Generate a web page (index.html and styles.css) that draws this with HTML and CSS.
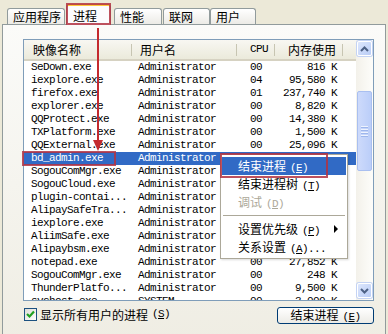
FILE: index.html
```html
<!DOCTYPE html>
<html lang="zh-CN">
<head>
    <meta charset="UTF-8">
    <title>Windows 任务管理器 - 进程</title>
    <link rel="stylesheet" href="styles.css">
</head>
<body>
    <div class="window">
        <div class="tabs">
            <div class="tab t1">应用程序</div>
            <div class="tab t2 sel">进程</div>
            <div class="tab t3">性能</div>
            <div class="tab t4">联网</div>
            <div class="tab t5">用户</div>
        </div>
        <div class="panel">
            <div class="list">
                <div class="list-main">
                    <div class="head">
                        <div class="hc name">映像名称</div>
                        <div class="hc user">用户名</div>
                        <div class="hc cpu mono">CPU</div>
                        <div class="hc mem">内存使用</div>
                        <div class="hc rest"></div>
                    </div>
                    <div class="row"><span class="name">SeDown.exe</span><span class="user">Administrator</span><span class="cpu">00</span><span class="mem">816 K</span></div>
                    <div class="row"><span class="name">iexplore.exe</span><span class="user">Administrator</span><span class="cpu">04</span><span class="mem">95,580 K</span></div>
                    <div class="row"><span class="name">firefox.exe</span><span class="user">Administrator</span><span class="cpu">01</span><span class="mem">237,740 K</span></div>
                    <div class="row"><span class="name">explorer.exe</span><span class="user">Administrator</span><span class="cpu">00</span><span class="mem">8,820 K</span></div>
                    <div class="row"><span class="name">QQProtect.exe</span><span class="user">Administrator</span><span class="cpu">00</span><span class="mem">14,380 K</span></div>
                    <div class="row"><span class="name">TXPlatform.exe</span><span class="user">Administrator</span><span class="cpu">00</span><span class="mem">1,500 K</span></div>
                    <div class="row"><span class="name">QQExternal.exe</span><span class="user">Administrator</span><span class="cpu">00</span><span class="mem">25,096 K</span></div>
                    <div class="row selected"><span class="name">bd_admin.exe</span><span class="user">Administrator</span><span class="cpu"></span><span class="mem"></span></div>
                    <div class="row"><span class="name">SogouComMgr.exe</span><span class="user">Administrator</span><span class="cpu"></span><span class="mem"></span></div>
                    <div class="row"><span class="name">SogouCloud.exe</span><span class="user">Administrator</span><span class="cpu"></span><span class="mem"></span></div>
                    <div class="row"><span class="name">plugin-contai...</span><span class="user">Administrator</span><span class="cpu"></span><span class="mem"></span></div>
                    <div class="row"><span class="name">AlipaySafeTra...</span><span class="user">Administrator</span><span class="cpu"></span><span class="mem"></span></div>
                    <div class="row"><span class="name">iexplore.exe</span><span class="user">Administrator</span><span class="cpu"></span><span class="mem"></span></div>
                    <div class="row"><span class="name">AliimSafe.exe</span><span class="user">Administrator</span><span class="cpu"></span><span class="mem"></span></div>
                    <div class="row"><span class="name">Alipaybsm.exe</span><span class="user">Administrator</span><span class="cpu"></span><span class="mem"></span></div>
                    <div class="row"><span class="name">notepad.exe</span><span class="user">Administrator</span><span class="cpu">00</span><span class="mem">27,852 K</span></div>
                    <div class="row"><span class="name">SogouComMgr.exe</span><span class="user">Administrator</span><span class="cpu">00</span><span class="mem">248 K</span></div>
                    <div class="row"><span class="name">ThunderPlatfo...</span><span class="user">Administrator</span><span class="cpu">00</span><span class="mem">9,500 K</span></div>
                    <div class="row"><span class="name">svchost.exe</span><span class="user">SYSTEM</span><span class="cpu">00</span><span class="mem">3,000 K</span></div>
                </div>
                <div class="vscroll">
                    <div class="sbtn up">
                        <svg width="9" height="6" viewBox="0 0 9 6"><path d="M1 5 L4.5 1.5 L8 5" fill="none" stroke="#4D6185" stroke-width="2"/></svg>
                    </div>
                    <div class="thumb"><span></span><span></span><span></span><span></span></div>
                    <div class="sbtn down">
                        <svg width="9" height="6" viewBox="0 0 9 6"><path d="M1 1 L4.5 4.5 L8 1" fill="none" stroke="#4D6185" stroke-width="2"/></svg>
                    </div>
                </div>
            </div>
            <div class="footer">
                <label class="check">
                    <span class="box">
                        <svg width="11" height="11" viewBox="0 0 11 11"><path d="M2 5 L4.5 7.5 L9 2.5" fill="none" stroke="#21A121" stroke-width="2.2"/></svg>
                    </span>
                    显示所有用户的进程<span class="mono key">(<u>S</u>)</span>
                </label>
                <button class="btn">结束进程<span class="mono key">(<u>E</u>)</span></button>
            </div>
        </div>

        <div class="menu">
            <div class="mi hot">结束进程<span class="mono key">(<u>E</u>)</span></div>
            <div class="mi">结束进程树<span class="mono key">(<u>T</u>)</span></div>
            <div class="mi off">调试<span class="mono key">(<u>D</u>)</span></div>
            <div class="sep"></div>
            <div class="mi sub">设置优先级<span class="mono key">(<u>P</u>)</span></div>
            <div class="mi">关系设置<span class="mono key">(<u>A</u>)...</span></div>
        </div>

        <div class="mark mark-tab"></div>
        <div class="mark mark-row"></div>
        <div class="mark mark-menu"></div>
        <div class="arrow-line"></div>
        <div class="arrow-head"></div>
    </div>
</body>
</html>
```

FILE: styles.css
```css
body {
    margin: 0;
    background-color: #ECE9D8;
    font-family: "Noto Sans CJK SC", sans-serif;
    font-size: 12px;
    color: #000000;
}
.window {
    position: relative;
    width: 388px;
    height: 334px;
    overflow: hidden;
    background-color: #ECE9D8;
}
.mono {
    font-family: "Liberation Mono", monospace;
    font-size: 11px;
    letter-spacing: -0.6px;
}
.key {
    margin-left: 4px;
}

/* tabs */
.tabs {
    display: flex;
    align-items: flex-end;
    height: 24px;
    padding-left: 7px;
    position: relative;
    z-index: 2;
}
.tab {
    box-sizing: border-box;
    height: 16px;
    line-height: 15px;
    padding-left: 5px;
    border: 1px solid #919B9C;
    border-bottom: none;
    border-radius: 3px 3px 0 0;
    background: linear-gradient(#FFFFFF, #ECEBE6);
}
.t1 { width: 58px; }
.t2 { width: 45px; margin-left: 1px; }
.t3 { width: 48px; margin-left: 3px; }
.t4 { width: 47px; margin-left: 1px; }
.t5 { width: 46px; }
.tab.sel {
    height: 21px;
    line-height: 19px;
    padding-left: 6px;
    margin-bottom: -1px;
    background: #FCFCFE;
    border-top: 2px solid #FFC83C;
}

/* panel */
.panel {
    box-sizing: border-box;
    margin-left: 2px;
    width: 384px;
    height: 320px;
    border: 1px solid #919B9C;
    background: linear-gradient(#FBFBF9, #EFEDE3);
    padding: 14px 0 0 20px;
}
.list {
    box-sizing: border-box;
    display: flex;
    width: 351px;
    height: 262px;
    border: 1px solid #7F9DB9;
    background-color: #FFFFFF;
}
.list-main {
    width: 332px;
    overflow: hidden;
}
.head {
    display: flex;
    box-sizing: border-box;
    height: 21px;
    line-height: 19px;
    background: linear-gradient(#F8F7F2, #EBEADB);
    border-bottom: 2px solid #D6D2C2;
}
.hc {
    position: relative;
    box-sizing: border-box;
}
.hc::after {
    content: "";
    position: absolute;
    right: 0;
    top: 4px;
    bottom: 3px;
    border-right: 1px solid #C7C5B2;
}
.hc.rest::after { display: none; }
.head .name { width: 108px; padding-left: 9px; }
.head .user { width: 105px; padding-left: 8px; }
.head .cpu { width: 38px; padding-left: 13px; }
.head .mem { width: 68px; text-align: right; padding-right: 7px; }
.head .rest { width: 13px; }

.row {
    display: flex;
    height: 13px;
    line-height: 13px;
    font-family: "Liberation Mono", monospace;
    font-size: 11px;
    letter-spacing: -0.6px;
    white-space: pre;
}
.row span { box-sizing: border-box; }
.row .name { width: 108px; padding-left: 7px; }
.row .user { width: 105px; padding-left: 6px; }
.row .cpu { width: 38px; padding-left: 13px; }
.row .mem { width: 68px; text-align: right; padding-right: 6px; }
.row.selected {
    background-color: #316AC5;
    color: #FFFFFF;
}

/* scrollbar */
.vscroll {
    display: flex;
    flex-direction: column;
    width: 17px;
    background: linear-gradient(90deg, #F3F1EA, #FDFDFA);
    padding: 1px 0 2px 1px;
    box-sizing: border-box;
}
.sbtn {
    display: flex;
    align-items: center;
    justify-content: center;
    box-sizing: border-box;
    width: 15px;
    height: 15px;
    border: 1px solid #FFFFFF;
    border-radius: 2px;
    background: linear-gradient(135deg, #DCE6FC, #BACDF6);
    box-shadow: 0 0 0 1px #C4D3F4;
}
.sbtn.down { margin-top: auto; }
.thumb {
    box-sizing: border-box;
    margin-top: 35px;
    width: 15px;
    height: 80px;
    border: 1px solid #A9BFF0;
    border-radius: 2px;
    background: linear-gradient(90deg, #CDDAFB, #BBCEF9);
    display: flex;
    flex-direction: column;
    align-items: center;
    justify-content: center;
    gap: 1px;
}
.thumb span {
    width: 7px;
    height: 1px;
    background-color: #EEF3FE;
    border-bottom: 1px solid #9DB6EC;
}

/* footer */
.footer {
    display: flex;
    justify-content: space-between;
    align-items: flex-start;
    margin-top: 6px;
    width: 351px;
}
.check {
    display: flex;
    align-items: center;
    margin-top: 1px;
    padding-left: 1px;
    line-height: 13px;
    height: 13px;
}
.box {
    display: flex;
    align-items: center;
    justify-content: center;
    box-sizing: border-box;
    width: 13px;
    height: 13px;
    margin-right: 3px;
    border: 1px solid #1C5180;
    background: linear-gradient(135deg, #DCDCD7, #FFFFFF);
}
.btn {
    box-sizing: border-box;
    width: 97px;
    height: 17px;
    padding: 0;
    font-family: "Noto Sans CJK SC", sans-serif;
    font-size: 12px;
    line-height: 14px;
    color: #000000;
    border: 1px solid #003C74;
    border-radius: 3px;
    background: linear-gradient(#FFFFFF, #ECEBE6);
}

/* context menu */
.menu {
    position: absolute;
    left: 220px;
    top: 154px;
    box-sizing: border-box;
    width: 128px;
    height: 105px;
    padding: 2px 1px;
    border: 1px solid #ACA899;
    background-color: #FFFFFF;
    box-shadow: 1px 1px 2px rgba(0, 0, 0, 0.15);
    z-index: 5;
}
.mi {
    position: relative;
    height: 18px;
    line-height: 18px;
    padding-left: 16px;
}
.mi.hot {
    background-color: #316AC5;
    color: #FFFFFF;
}
.mi.off { color: #ACA899; }
.mi.sub::after {
    content: "";
    position: absolute;
    right: 8px;
    top: 5px;
    border-top: 4px solid transparent;
    border-bottom: 4px solid transparent;
    border-left: 4px solid #000000;
}
.sep {
    height: 1px;
    margin: 4px 1px;
    background-color: #ACA899;
}

/* red annotations */
.mark {
    position: absolute;
    box-sizing: border-box;
    border: 2px solid rgba(178, 50, 66, 0.85);
    z-index: 6;
}
.mark-tab { left: 66px; top: 3px; width: 45px; height: 22px; }
.mark-row { left: 22px; top: 151px; width: 94px; height: 15px; }
.mark-menu { left: 220px; top: 153px; width: 108px; height: 25px; }
.arrow-line {
    position: absolute;
    left: 97px;
    top: 28px;
    width: 2px;
    height: 114px;
    background-color: #C42A2E;
    z-index: 6;
}
.arrow-head {
    position: absolute;
    left: 93px;
    top: 140px;
    border-left: 5px solid transparent;
    border-right: 5px solid transparent;
    border-top: 11px solid #C42A2E;
    z-index: 6;
}
```
